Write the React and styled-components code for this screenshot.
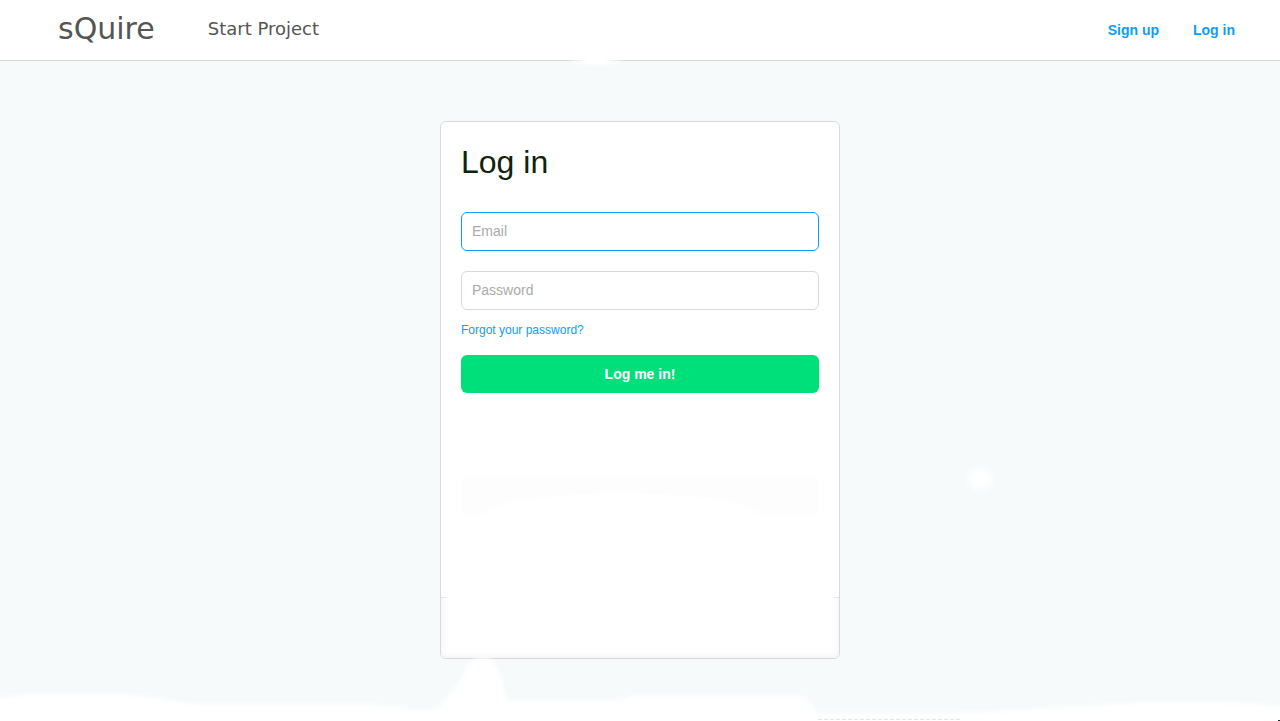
import React from "react";
import styled, { createGlobalStyle } from "styled-components";

const GlobalStyle = createGlobalStyle`
  *, *::before, *::after { box-sizing: border-box; }
  body {
    margin: 0;
    background: #f6fafb;
    font-family: "Liberation Sans", Arial, sans-serif;
    font-size: 14px;
  }
`;

const Page = styled.div`
  position: relative;
  min-height: 100vh;
  display: flex;
  flex-direction: column;
  overflow: hidden;
`;

const Header = styled.header`
  display: flex;
  align-items: center;
  justify-content: space-between;
  height: 61px;
  padding: 0 45px 0 58px;
  background: #fff;
  border-bottom: 1px solid #d8d8dc;
`;

const Brand = styled.nav`
  display: flex;
  align-items: center;
  gap: 53px;
  padding-bottom: 2px;
  font-family: "DejaVu Sans", Verdana, sans-serif;
`;

const Logo = styled.a`
  color: #555;
  font-size: 30px;
  line-height: 36px;
  text-decoration: none;
`;

const BrandLink = styled.a`
  color: #555;
  font-size: 18px;
  line-height: 24px;
  text-decoration: none;
`;

const Account = styled.nav`
  display: flex;
  gap: 34px;
`;

const AccountLink = styled.a`
  color: #0d9dfb;
  font-weight: bold;
  line-height: 16px;
  text-decoration: none;
`;

const Main = styled.main`
  flex: 1;
  display: flex;
  justify-content: center;
  align-items: flex-start;
  padding: 60px 20px;
`;

const Card = styled.section`
  display: flex;
  flex-direction: column;
  width: 100%;
  max-width: 400px;
  min-height: 538px;
  background: #fff;
  border: 1px solid #d8d9dc;
  border-radius: 6px;
  overflow: hidden;
`;

const Form = styled.form`
  flex: 1;
  display: flex;
  flex-direction: column;
  padding: 20px;
`;

const Title = styled.h1`
  margin: 0 0 30px;
  color: #0f230b;
  font-size: 32px;
  font-weight: normal;
  line-height: 40px;
`;

const Field = styled.input`
  width: 100%;
  height: 39px;
  margin-bottom: ${(p) => (p.$last ? "12px" : "20px")};
  padding: 0 10px 2px;
  border: 1px solid ${(p) => (p.$active ? "#0d9dfb" : "#d8d9dc")};
  border-radius: 6px;
  outline: none;
  background: #fff;
  color: #333;
  font: inherit;

  &::placeholder { color: #aaa; opacity: 1; }
`;

const ForgotLink = styled.a`
  align-self: flex-start;
  margin-bottom: 17px;
  color: #0d9dfb;
  font-size: 12px;
  line-height: 16px;
  text-decoration: none;
`;

const Submit = styled.button`
  height: 38px;
  border: 0;
  border-radius: 6px;
  background: #00e07a;
  color: #fff;
  font: inherit;
  font-weight: bold;
  cursor: pointer;
`;

const FadedPanel = styled.div`
  height: 38px;
  margin-top: 84px;
  border-radius: 6px;
  background: radial-gradient(ellipse 40% 60% at 45% 100%, #fff 90%, #fdfdfd);
`;

const CardFooter = styled.footer`
  height: 61px;
  background:
    linear-gradient(90deg, #dcdcde, transparent 8px, transparent calc(100% - 8px), #dcdcde) top / 100% 1px no-repeat,
    linear-gradient(0deg, #f8f5f6, transparent 6px),
    linear-gradient(90deg, #f9f7f8, #fff 6px, #fff calc(100% - 6px), #f9f7f8);
`;

const Glow = styled.span`
  position: absolute;
  left: ${(p) => p.$x};
  top: ${(p) => p.$y};
  width: ${(p) => p.$w};
  height: ${(p) => p.$h};
  transform: translate(-50%, -50%);
  background: radial-gradient(closest-side, #fff 30%, rgba(255, 255, 255, 0));
  pointer-events: none;
`;

const Wave = styled.svg`
  position: absolute;
  left: 0;
  bottom: 0;
  width: 100%;
  height: 71px;
  pointer-events: none;
`;

export default function App() {
  return (
    <Page>
      <GlobalStyle />
      <Header>
        <Brand aria-label="Main">
          <Logo href="#home">sQuire</Logo>
          <BrandLink href="#start">Start Project</BrandLink>
        </Brand>
        <Account aria-label="Account">
          <AccountLink href="#signup">Sign up</AccountLink>
          <AccountLink href="#login">Log in</AccountLink>
        </Account>
      </Header>
      <Main>
        <Card>
          <Form onSubmit={(e) => e.preventDefault()}>
            <Title>Log in</Title>
            <Field $active type="email" placeholder="Email" aria-label="Email" />
            <Field $last type="password" placeholder="Password" aria-label="Password" />
            <ForgotLink href="#forgot">Forgot your password?</ForgotLink>
            <Submit type="submit">Log me in!</Submit>
            <FadedPanel />
          </Form>
          <CardFooter />
        </Card>
      </Main>
      <Glow $x="46.6%" $y="60px" $w="60px" $h="16px" />
      <Glow $x="76.6%" $y="479px" $w="34px" $h="34px" />
      <Wave viewBox="0 0 1280 71" preserveAspectRatio="none" aria-hidden="true">
        <defs>
          <filter id="soft" x="-5%" y="-20%" width="110%" height="140%">
            <feGaussianBlur stdDeviation="2" />
          </filter>
        </defs>
        <path
          filter="url(#soft)"
          fill="#fff"
          d="M-20 50 Q20 44 50 44 L115 44 C150 44 165 54 210 54 L360 54 Q390 55 415 60 Q432 62 440 56 C454 40 462 30 468 14 Q479 4 492 10 C502 22 502 40 508 51 L605 51 Q625 50 635 45 L795 45 Q810 46 816 63 L950 63 C1030 61 1090 54 1160 52 L1250 53 Q1275 55 1300 58 L1300 90 L-20 90 Z"
        />
        <path d="M818 69.5 H962" stroke="#e2e8e7" strokeDasharray="4 2" />
        <path d="M1278 70 h2 v1 h-2 z" fill="#12332e" />
      </Wave>
    </Page>
  );
}
